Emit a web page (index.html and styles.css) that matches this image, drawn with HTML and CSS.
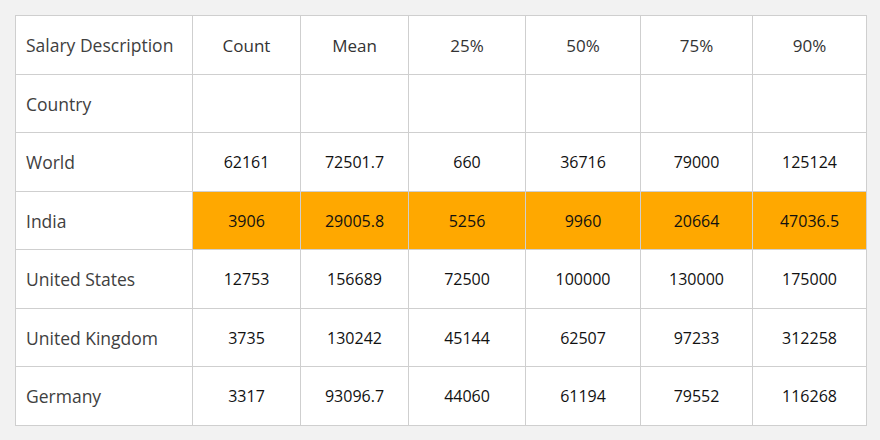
FILE: index.html
```html
<!DOCTYPE html>
<html>
<head>
<meta charset="utf-8">
<link rel="stylesheet" href="styles.css">
</head>
<body>
<table class="stats">
  <colgroup>
    <col class="c0"><col class="c1"><col class="c2"><col class="c3"><col class="c4"><col class="c5"><col class="c6">
  </colgroup>
  <tr class="head"><td class="label">Salary Description</td><td>Count</td><td>Mean</td><td>25%</td><td>50%</td><td>75%</td><td>90%</td></tr>
  <tr class="head"><td class="label">Country</td><td></td><td></td><td></td><td></td><td></td><td></td></tr>
  <tr><td class="label">World</td><td>62161</td><td>72501.7</td><td>660</td><td>36716</td><td>79000</td><td>125124</td></tr>
  <tr class="hl"><td class="label">India</td><td>3906</td><td>29005.8</td><td>5256</td><td>9960</td><td>20664</td><td>47036.5</td></tr>
  <tr><td class="label">United States</td><td>12753</td><td>156689</td><td>72500</td><td>100000</td><td>130000</td><td>175000</td></tr>
  <tr><td class="label">United Kingdom</td><td>3735</td><td>130242</td><td>45144</td><td>62507</td><td>97233</td><td>312258</td></tr>
  <tr><td class="label">Germany</td><td>3317</td><td>93096.7</td><td>44060</td><td>61194</td><td>79552</td><td>116268</td></tr>
</table>
</body>
</html>
```
FILE: styles.css
```css
html, body { margin: 0; padding: 0; }
body {
  background: #f2f2f2;
  padding: 15px;
  font-family: "Open Sans", "Liberation Sans", sans-serif;
}
.stats {
  border-collapse: collapse;
  background: #fff;
  table-layout: fixed;
  width: 851px;
}
.c0 { width: 177px; }
.c1 { width: 108px; }
.c2 { width: 108px; }
.c3 { width: 117px; }
.c4 { width: 115px; }
.c5 { width: 112px; }
.c6 { width: 114px; }
.stats td {
  border: 1px solid #cfcfcf;
  height: 56.5px;
  padding: 1px 0 0 0;
  text-align: center;
  font-size: 16px;
  color: #111;
}
.stats .head td { color: #333; font-size: 17px; }
.stats td.label {
  text-align: left;
  padding-left: 10px;
  color: #404040;
  font-size: 17.5px;
}
.stats .hl td { background: #ffa800; }
.stats .hl td.label { background: #fff; }
```
